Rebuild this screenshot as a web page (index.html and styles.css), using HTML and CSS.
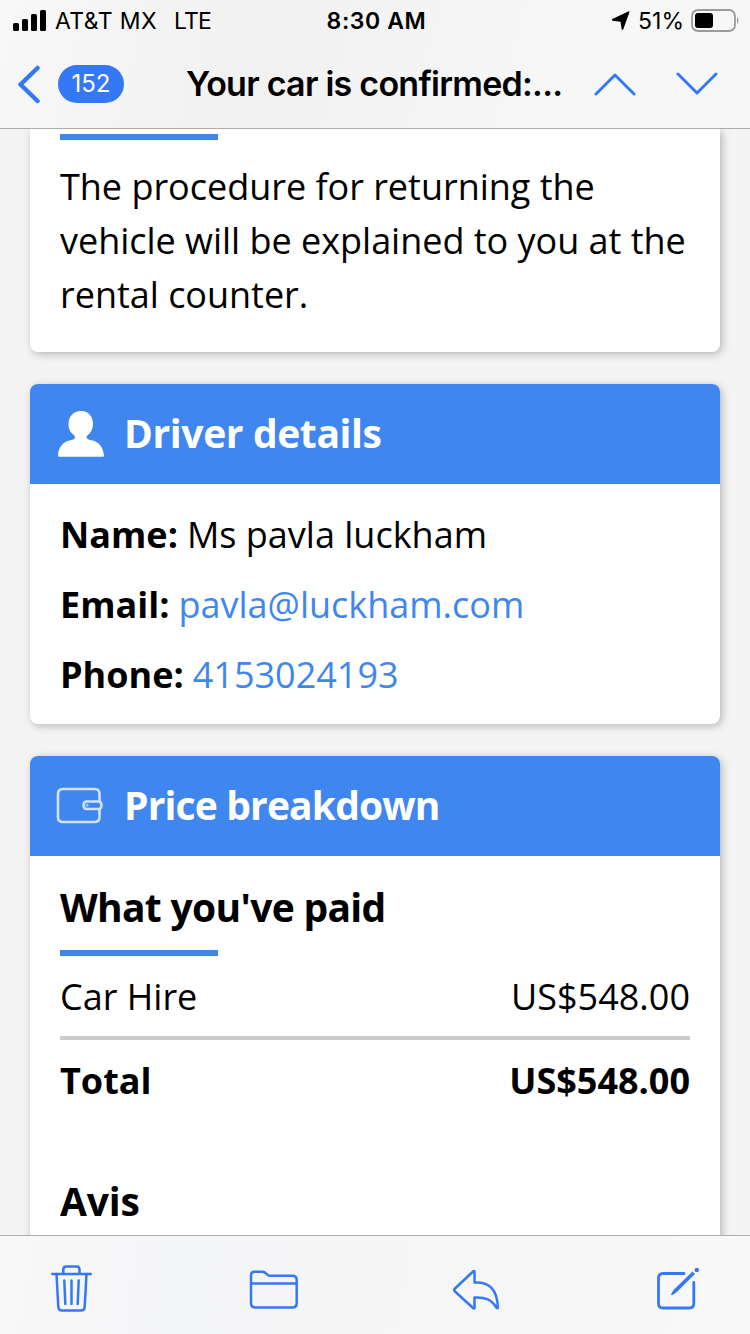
FILE: index.html
```html
<!DOCTYPE html>
<html lang="en">
<head>
<meta charset="utf-8">
<title>Mail</title>
<link rel="stylesheet" href="styles.css">
</head>
<body>
<header class="top">
  <div class="status">
    <div class="status-left">
      <svg class="signal" width="33" height="22" viewBox="0 0 33 22"><rect x="0" y="13" width="6" height="8" rx="1.5"/><rect x="9" y="9" width="6" height="12" rx="1.5"/><rect x="18" y="4" width="6" height="17" rx="1.5"/><rect x="27" y="0" width="6" height="21" rx="1.5"/></svg>
      <span class="carrier">AT&amp;T MX</span>
      <span class="network">LTE</span>
    </div>
    <span class="clock">8:30 AM</span>
    <div class="status-right">
      <svg width="20" height="20" viewBox="0 0 20 20"><path d="M18.400 1.200 12.300 18.200Q11.500 19.400 10.700 18.200L9.500 10.800 1.500 9.700Q.2 9 1.300 8L17.200.4Q18.600 0 18.400 1.200Z"/></svg>
      <span class="percent">51%</span>
      <svg class="battery" width="49" height="24" viewBox="0 0 49 24"><rect x="1" y="1" width="43" height="21" rx="6" fill="none" stroke="#9a9a9a" stroke-width="1.800"/><rect x="4" y="4" width="18" height="15" rx="3"/><path d="M46 8Q49 11.500 46 15Z" fill="#9a9a9a"/></svg>
    </div>
  </div>
  <div class="nav">
    <svg class="back" width="24" height="40" viewBox="0 0 24 40"><path d="M21.500 4 4.500 20.500 21.500 37"/></svg>
    <span class="count">152</span>
    <h1 class="subject">Your car is confirmed:...</h1>
    <svg class="chevron up" width="42" height="24" viewBox="0 0 42 24"><path d="M2 22 21 3 40 22"/></svg>
    <svg class="chevron down" width="42" height="24" viewBox="0 0 42 24"><path d="M2 2 21 21 40 2"/></svg>
  </div>
</header>

<main class="mail">
  <section class="card card-return">
    <div class="rule"></div>
    <p class="text">The procedure for returning the<br>vehicle will be explained to you at the<br>rental counter.</p>
  </section>

  <section class="card">
    <div class="card-head">
      <svg class="head-icon" width="50" height="50" viewBox="0 0 50 50"><path fill="#fff" d="M26 2C34 2 38 8 38 15C38 21 35 24 32 27C31 29 32 30 35 31C43 32 48 37 49 46.500Q49 47.700 48 47.700H4Q3 47.700 3 46.500C3.500 37 9 32 17 31C20 30 21 29 19 26C16 24 13.500 21 13.500 15C13.500 8 18 2 26 2Z"/></svg>
      <h2 class="head-title driver">Driver details</h2>
    </div>
    <div class="details">
      <p class="row"><b>Name:</b><span>Ms pavla luckham</span></p>
      <p class="row"><b>Email:</b><a>pavla@luckham.com</a></p>
      <p class="row"><b>Phone:</b><a>4153024193</a></p>
    </div>
  </section>

  <section class="card card-price">
    <div class="card-head">
      <svg class="head-icon" width="50" height="50" viewBox="0 0 50 50" fill="none" stroke="#d0e3fc" stroke-width="2.600"><path d="M44.500 20V13Q44.500 8 39.500 8H8Q3 8 3 13V36.500Q3 41 8 41H39.500Q44.500 41 44.500 36V28"/><path d="M43.500 20.500H32Q28.500 20.500 28.500 24.300T32 28H43.500Q46.500 28 46.500 24.300T43.500 20.500Z"/><circle cx="32" cy="24.300" r="1" stroke-width="1"/></svg>
      <h2 class="head-title price">Price breakdown</h2>
    </div>
    <div class="price-body">
      <h3 class="sub paid">What you've paid</h3>
      <div class="rule"></div>
      <div class="line"><span>Car Hire</span><span>US$548.00</span></div>
      <div class="total"><span>Total</span><span>US$548.00</span></div>
      <h3 class="sub avis">Avis</h3>
    </div>
  </section>
</main>

<footer class="toolbar">
  <svg width="42" height="50" viewBox="0 0 42 50"><path stroke-width="2.500" d="M1.300 10H39.700M12.300 10V5.500Q12.300 2.500 15.300 2.500H25.500Q28.500 2.500 28.500 5.500V10"/><path stroke-width="2.500" d="M5.500 10 7.300 43Q7.500 46.500 11 46.500H30Q33.500 46.500 33.700 43L35.500 10M13.300 16.500 14.300 40M20.500 16.500V40M27.700 16.500 26.700 40"/></svg>
  <svg width="50" height="50" viewBox="0 0 50 50"><path stroke-width="2.500" d="M2 38.500V11.500Q2 7.800 5.500 7.800H13Q15.500 7.800 17.500 9.800T21 11.700H43.500Q47.700 11.700 47.700 16V39Q47.700 43.500 43.500 43.500H6.500Q2 43.500 2 39V36M2 19.500H47.700"/></svg>
  <svg class="reply" width="48" height="50" viewBox="0 0 48 50"><path stroke-width="2.500" d="M22.500 8V18.500C37 17.500 45.500 25.500 45.800 43.500Q45.300 45 44 43C39 35 33 33 22.500 33.500V43.500Q22.500 45.500 20.500 43.500L3 27.500Q1.500 26 3 24.500L20.500 8Q22.500 6 22.500 8Z"/></svg>
  <svg width="44" height="50" viewBox="0 0 44 50"><path stroke-width="2.800" d="M28 9.500H7Q2.500 9.500 2.500 14V39.500Q2.500 44 7 44H33Q37.800 44 37.800 39.500V18.500"/><path class="pencil" d="M36.500 7.500 39 10 20 28.700 16 31.200Q14.800 31.200 15.200 30L17.500 26Z"/><circle class="pencil" cx="40.800" cy="6" r="2.200"/></svg>
</footer>
</body>
</html>
```
FILE: styles.css
```css
* { box-sizing: border-box; }
body {
  margin: 0; width: 750px; height: 1334px; overflow: hidden;
  display: flex; flex-direction: column;
  background: #f4f4f4; color: #000;
  font-family: "Open Sans", "Noto Sans", sans-serif;
}
h1, h2, h3, p { margin: 0; }
svg { display: block; flex: none; }
span, b, a, h1, h2, h3 { white-space: nowrap; }

.top {
  flex: none; height: 129px; border-bottom: 1px solid #adadae;
  background: linear-gradient(105deg, #f8f8f8 0%, #f1f1f1 35%, #f7f7f7 75%);
  font-family: Inter, "Liberation Sans", sans-serif;
}
.status {
  display: grid; grid-template-columns: 1fr auto 1fr; align-items: center;
  height: 42px; padding: 0 10px 0 13px; font-size: 23px; line-height: 42px;
}
.status-left, .status-right { display: flex; align-items: center; }
.status-right { justify-content: flex-end; }
.carrier { margin-left: 9px; letter-spacing: 0.4px; }
.network { margin-left: 17px; letter-spacing: -0.9px; }
.clock { font-weight: 600; letter-spacing: 0.6px; }
.percent { margin-left: 7px; margin-right: 7px; letter-spacing: 0; }
.nav { display: flex; align-items: center; height: 84px; padding-left: 16px; }
.back { fill: none; stroke: #3478f6; stroke-width: 4.5; stroke-linecap: round; stroke-linejoin: round; }
.count {
  width: 66px; height: 38px; margin-left: 18px; border-radius: 19px;
  background: #3478f6; color: #fff; font-size: 24px; line-height: 38px; text-align: center;
}
.subject { width: 377px; margin-left: 62px; font-size: 34px; font-weight: 600; letter-spacing: -0.75px; line-height: 44px; }
.chevron { fill: none; stroke: #3478f6; stroke-width: 3; stroke-linecap: round; stroke-linejoin: round; }
.up { margin-left: 31px; }
.down { margin-left: 40px; }

.mail { flex: 1; min-height: 0; overflow: hidden; padding: 0 30px; }
.card {
  margin-bottom: 32px; border-radius: 8px; background: #fff;
  box-shadow: 2px 2px 8px rgba(0, 0, 0, 0.26);
}
.card-return { padding: 5px 30px 30px; border-radius: 0 0 8px 8px; }
.rule { width: 158px; height: 6px; background: #3f87ee; }
.text { margin-top: 20px; font-size: 36px; line-height: 54px; letter-spacing: -0.02px; }
.card-head {
  display: flex; align-items: center; height: 100px; padding-left: 25px;
  border-radius: 8px 8px 0 0; background: #3f87ee; color: #fff;
}
.head-title { margin-left: 19px; padding-bottom: 2px; font-size: 39px; line-height: 54px; font-weight: 700; }
.driver { letter-spacing: -0.38px; }
.price { letter-spacing: -0.85px; }
.details { display: flex; flex-direction: column; gap: 16px; padding: 24px 30px 22px; }
.row { display: flex; gap: 9px; font-size: 36px; line-height: 54px; }
.row a { color: #3f87ee; }
.card-price { height: 600px; }
.price-body { padding: 24px 30px 0; }
.sub { margin-bottom: 16px; font-size: 39px; line-height: 54px; font-weight: 700; }
.paid { letter-spacing: -0.68px; }
.avis { letter-spacing: -0.2px; }
.line, .total { display: flex; justify-content: space-between; font-size: 36px; line-height: 54px; }
.line { margin-top: 14px; padding-bottom: 12px; border-bottom: 4px solid #ccc; }
.total { margin-top: 14px; margin-bottom: 66px; font-weight: 700; }

.toolbar {
  flex: none; display: flex; justify-content: space-between; height: 99px;
  padding: 28px 50px 0 51px; border-top: 1px solid #adadae;
  background: linear-gradient(100deg, #f8f8f8, #f4f5f7 25%, #f6f6f6 60%, #f8f8f8);
}
.toolbar path { fill: none; stroke: #3478f6; stroke-linecap: round; stroke-linejoin: round; }
.toolbar .pencil { fill: #3478f6; stroke: none; }
.reply { margin-left: -4px; }
```
